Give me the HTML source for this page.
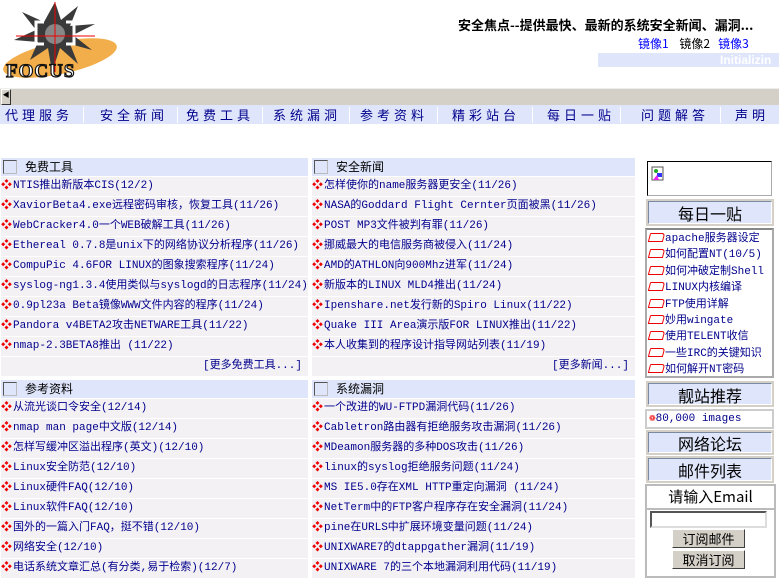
<!DOCTYPE html>
<html><head><meta charset="utf-8"><style>
*{margin:0;padding:0;box-sizing:border-box}
body{width:779px;height:578px;overflow:hidden;background:#fff;font-family:"Liberation Mono","Noto Sans CJK SC",monospace;font-size:12px;color:#000;position:relative}
.a{position:absolute;white-space:nowrap}
.nav{position:absolute;top:105px;left:0;width:779px;height:19px;background:#dfe6fb}
.nav span{position:absolute;top:2px;color:#00008b;font-family:"Noto Sans CJK SC",sans-serif;font-size:13px;letter-spacing:4px;line-height:15px}
.nav i{position:absolute;top:2px;width:1px;height:16px;background:#fff}
.hd{position:absolute;height:18px;background:#dfe6fb;font-family:"Noto Sans CJK SC",sans-serif;font-size:12px;line-height:18px}
.hd b{display:inline-block;width:14px;height:14px;border:1px solid #555;border-right-color:#bbb;border-bottom-color:#bbb;vertical-align:-3px;margin:0 8px 0 2px;font-weight:normal}
.row{position:absolute;height:19px;background:#f4f1f5;color:#00008b;line-height:19px;font-size:11px}
.row:before{content:"❖";color:#e00;font-size:11px;margin-right:1px}
.more{position:absolute;height:19px;background:#f4f1f5;color:#00008b;line-height:19px;text-align:right;font-size:11px;padding-right:6px}
.rb{position:absolute;left:646px;width:128px;background:#dfe6fb;border:2px solid #d4d0c8;font-family:"Noto Sans CJK SC",sans-serif;font-size:16px;text-align:center}
.rb div{border:1px solid #7a8aa0;border-right-color:#fff;border-bottom-color:#fff;height:100%;line-height:19px}
.li{color:#00008b;font-size:11px;height:16.4px;line-height:16px;white-space:nowrap}
.fo{display:inline-block;width:15px;height:9px;border:1.5px solid #e00;margin-right:1px;vertical-align:-1px;border-radius:1px 3px 0 0;transform:skewX(-15deg)}
.btn{position:absolute;left:672px;width:73px;height:19px;background:#d4d0c8;border:1px solid #fff;border-right-color:#404040;border-bottom-color:#404040;font-family:"Noto Sans CJK SC",sans-serif;font-size:13px;text-align:center;line-height:17px}
</style></head><body>

<svg class="a" style="left:0;top:0" width="125" height="80" viewBox="0 0 125 80">
<ellipse cx="60" cy="58" rx="58" ry="16" fill="#f2ae4a" transform="rotate(-12 60 58)"/>
<polygon points="55,2 61,20 78,6 70,26 95,24 73,35 92,50 70,44 78,64 60,48 52,72 48,48 30,60 38,42 14,40 36,30 22,12 44,22" fill="#3a3a3a"/>
<circle cx="55" cy="34" r="10" fill="#888"/>
<path d="M44 22h-8v22h8M66 22h8v22h-8" stroke="#fff" stroke-width="3" fill="none"/>
<path d="M55 2v70M16 36h79" stroke="#e00" stroke-width="1"/>
<text x="6" y="77" font-family="Liberation Serif" font-weight="bold" font-size="19" fill="#fff" stroke="#111" stroke-width="1.2" letter-spacing="1">FOCUS</text>
</svg>

<div class="a" style="left:458px;top:15px;font-family:'Noto Sans CJK SC',sans-serif;font-weight:bold;font-size:13px">安全焦点--提供最快、最新的系统安全新闻、漏洞...</div>
<div class="a" style="left:638px;top:35px;font-size:12px;font-family:'Noto Sans CJK SC',sans-serif"><span style="color:#00f">镜像1</span>&nbsp;&nbsp;&nbsp;&nbsp;镜像2&nbsp;&nbsp;&nbsp;<span style="color:#00f">镜像3</span></div>
<div class="a" style="left:598px;top:53px;width:181px;height:14px;background:#dfe6fb;color:#fff;font-weight:bold;font-size:12px;line-height:14px;padding-left:122px;font-family:'Liberation Sans',sans-serif">Initializin</div>

<div class="a" style="left:0;top:88px;width:779px;height:17px;background:#d4d0c8;border-top:1px solid #eee"></div>
<div class="a" style="left:1px;top:89px;width:10px;height:16px;background:#d4d0c8;border:1px solid #fff;border-right-color:#333;border-bottom-color:#333;font-size:7px;line-height:13px;text-align:center">◀</div>

<div class="nav">
<span style="left:5px">代理服务</span><i style="left:83px"></i>
<span style="left:100px">安全新闻</span><i style="left:177px"></i>
<span style="left:186px">免费工具</span><i style="left:262px"></i>
<span style="left:273px">系统漏洞</span><i style="left:349px"></i>
<span style="left:360px">参考资料</span><i style="left:437px"></i>
<span style="left:452px">精彩站台</span><i style="left:532px"></i>
<span style="left:547px">每日一贴</span><i style="left:620px"></i>
<span style="left:641px">问题解答</span><i style="left:720px"></i>
<span style="left:735px">声明</span>
</div>

<div class="hd" style="left:1px;top:158px;width:307px"><b></b>免费工具</div>
<div class="hd" style="left:312px;top:158px;width:323px"><b></b>安全新闻</div>

<div class="row" style="left:1px;top:177px;width:307px">NTIS推出新版本CIS(12/2)</div>
<div class="row" style="left:1px;top:197px;width:307px">XaviorBeta4.exe远程密码审核，恢复工具(11/26)</div>
<div class="row" style="left:1px;top:217px;width:307px">WebCracker4.0一个WEB破解工具(11/26)</div>
<div class="row" style="left:1px;top:237px;width:307px">Ethereal 0.7.8是unix下的网络协议分析程序(11/26)</div>
<div class="row" style="left:1px;top:257px;width:307px">CompuPic 4.6FOR LINUX的图象搜索程序(11/24)</div>
<div class="row" style="left:1px;top:277px;width:307px">syslog-ng1.3.4使用类似与syslogd的日志程序(11/24)</div>
<div class="row" style="left:1px;top:297px;width:307px">0.9pl23a Beta镜像WWW文件内容的程序(11/24)</div>
<div class="row" style="left:1px;top:317px;width:307px">Pandora v4BETA2攻击NETWARE工具(11/22)</div>
<div class="row" style="left:1px;top:337px;width:307px">nmap-2.3BETA8推出 (11/22)</div>
<div class="more" style="left:1px;top:357px;width:307px">[更多免费工具...]</div>

<div class="row" style="left:312px;top:177px;width:323px">怎样使你的name服务器更安全(11/26)</div>
<div class="row" style="left:312px;top:197px;width:323px">NASA的Goddard Flight Cernter页面被黑(11/26)</div>
<div class="row" style="left:312px;top:217px;width:323px">POST MP3文件被判有罪(11/26)</div>
<div class="row" style="left:312px;top:237px;width:323px">挪威最大的电信服务商被侵入(11/24)</div>
<div class="row" style="left:312px;top:257px;width:323px">AMD的ATHLON向900Mhz进军(11/24)</div>
<div class="row" style="left:312px;top:277px;width:323px">新版本的LINUX MLD4推出(11/24)</div>
<div class="row" style="left:312px;top:297px;width:323px">Ipenshare.net发行新的Spiro Linux(11/22)</div>
<div class="row" style="left:312px;top:317px;width:323px">Quake III Area演示版FOR LINUX推出(11/22)</div>
<div class="row" style="left:312px;top:337px;width:323px">本人收集到的程序设计指导网站列表(11/19)</div>
<div class="more" style="left:312px;top:357px;width:323px">[更多新闻...]</div>

<div class="hd" style="left:1px;top:380px;width:307px"><b></b>参考资料</div>
<div class="hd" style="left:312px;top:380px;width:323px"><b></b>系统漏洞</div>

<div class="row" style="left:1px;top:399px;width:307px">从流光谈口令安全(12/14)</div>
<div class="row" style="left:1px;top:419px;width:307px">nmap man page中文版(12/14)</div>
<div class="row" style="left:1px;top:439px;width:307px">怎样写缓冲区溢出程序(英文)(12/10)</div>
<div class="row" style="left:1px;top:459px;width:307px">Linux安全防范(12/10)</div>
<div class="row" style="left:1px;top:479px;width:307px">Linux硬件FAQ(12/10)</div>
<div class="row" style="left:1px;top:499px;width:307px">Linux软件FAQ(12/10)</div>
<div class="row" style="left:1px;top:519px;width:307px">国外的一篇入门FAQ，挺不错(12/10)</div>
<div class="row" style="left:1px;top:539px;width:307px">网络安全(12/10)</div>
<div class="row" style="left:1px;top:559px;width:307px">电话系统文章汇总(有分类,易于检索)(12/7)</div>

<div class="row" style="left:312px;top:399px;width:323px">一个改进的WU-FTPD漏洞代码(11/26)</div>
<div class="row" style="left:312px;top:419px;width:323px">Cabletron路由器有拒绝服务攻击漏洞(11/26)</div>
<div class="row" style="left:312px;top:439px;width:323px">MDeamon服务器的多种DOS攻击(11/26)</div>
<div class="row" style="left:312px;top:459px;width:323px">linux的syslog拒绝服务问题(11/24)</div>
<div class="row" style="left:312px;top:479px;width:323px">MS IE5.0存在XML HTTP重定向漏洞 (11/24)</div>
<div class="row" style="left:312px;top:499px;width:323px">NetTerm中的FTP客户程序存在安全漏洞(11/24)</div>
<div class="row" style="left:312px;top:519px;width:323px">pine在URLS中扩展环境变量问题(11/24)</div>
<div class="row" style="left:312px;top:539px;width:323px">UNIXWARE7的dtappgather漏洞(11/19)</div>
<div class="row" style="left:312px;top:559px;width:323px">UNIXWARE 7的三个本地漏洞利用代码(11/19)</div>

<div class="a" style="left:647px;top:161px;width:125px;height:35px;border:1px solid #000;border-right-color:#aaa;border-bottom-color:#aaa"></div>
<svg class="a" style="left:651px;top:166px" width="14" height="16"><rect x="1" y="1" width="11" height="13" fill="#fff" stroke="#555"/><circle cx="5" cy="5" r="2" fill="#2a2"/><rect x="6" y="7" width="5" height="4" fill="#33f"/><polygon points="2,14 6,9 8,14" fill="#e2e"/></svg>
<div class="rb" style="top:199px;height:27px"><div style="line-height:23px">每日一贴</div></div>
<div class="a" style="left:645px;top:228px;width:129px;height:150px;border:2px solid #aaa;border-top-color:#888;padding:1px 0 0 2px">
<div class="li"><span class="fo"></span>apache服务器设定</div>
<div class="li"><span class="fo"></span>如何配置NT(10/5)</div>
<div class="li"><span class="fo"></span>如何冲破定制Shell</div>
<div class="li"><span class="fo"></span>LINUX内核编译</div>
<div class="li"><span class="fo"></span>FTP使用详解</div>
<div class="li"><span class="fo"></span>妙用wingate</div>
<div class="li"><span class="fo"></span>使用TELENT收信</div>
<div class="li"><span class="fo"></span>一些IRC的关键知识</div>
<div class="li"><span class="fo"></span>如何解开NT密码</div>
</div>
<div class="rb" style="top:381px;height:26px"><div style="line-height:22px">靓站推荐</div></div>
<div class="a" style="left:645px;top:409px;width:129px;height:20px;border:2px solid #ccc;color:#00008b;font-size:11px;line-height:16px;padding-left:2px"><span style="color:#e00">❁</span>80,000 images</div>
<div class="rb" style="top:430px;height:25px"><div style="line-height:21px">网络论坛</div></div>
<div class="rb" style="top:456px;height:27px"><div style="line-height:23px">邮件列表</div></div>
<div class="a" style="left:645px;top:484px;width:131px;height:26px;border:2px solid #bbb;font-family:'Noto Sans CJK SC',sans-serif;font-size:15px;text-align:center;line-height:22px">请输入Email</div>
<div class="a" style="left:645px;top:510px;width:131px;height:68px;border:2px solid #bbb;border-top:0"></div>
<div class="a" style="left:650px;top:511px;width:117px;height:17px;border:2px solid #555;border-right-color:#ddd;border-bottom-color:#ddd;background:#fff"></div>
<div class="btn" style="top:529px">订阅邮件</div>
<div class="btn" style="top:550px">取消订阅</div>
</body></html>
